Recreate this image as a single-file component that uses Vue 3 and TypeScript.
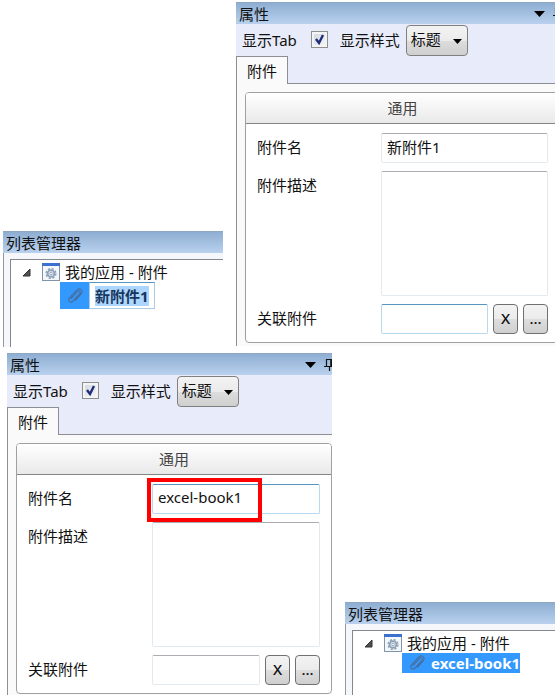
<script setup lang="ts">
import { reactive } from 'vue'

interface Attachment {
  id: string
  name: string
  description: string
  linked: string
  focus: 'name' | 'linked'
  editing: boolean
}

const created = reactive<Attachment>({
  id: 'created', name: '新附件1', description: '', linked: '', focus: 'linked', editing: true,
})
const renamed = reactive<Attachment>({
  id: 'renamed', name: 'excel-book1', description: '', linked: '', focus: 'name', editing: false,
})

// Each step shows its windows from left to right.
const steps = [
  { id: 'before', item: created, windows: ['list', 'props'] },
  { id: 'after', item: renamed, windows: ['props', 'list'] },
]
</script>

<template>
  <main class="page">
    <div v-for="step in steps" :key="step.id" class="step" :class="step.id">
      <template v-for="kind in step.windows" :key="kind">
        <section v-if="kind === 'list'" class="window list">
          <h2 class="title">列表管理器</h2>
          <div class="frame">
            <div class="tree">
              <div class="node">
                <svg class="expander" viewBox="0 0 9 9" aria-hidden="true">
                  <path d="M8 1v7H1z" fill="#505050" stroke="#333" />
                </svg>
                <svg class="app-icon" viewBox="0 0 18 18" aria-hidden="true">
                  <rect x=".5" y=".5" width="17" height="17" fill="#f4f7fa" stroke="#8292a8" />
                  <path d="M0 0h18v3H0z" fill="#3b6fd0" />
                  <circle cx="9" cy="10.500" r="4.900" fill="none" stroke="#8a9fb6" stroke-width="1.400" stroke-dasharray="2.200 1.648" />
                  <circle cx="9" cy="10.500" r="3.400" fill="#e4ebf2" stroke="#8ca1b8" stroke-width="1.800" />
                  <circle cx="9" cy="10.500" r="1.300" fill="#fff" stroke="#8195ac" stroke-width=".8" />
                </svg>
                <span>我的应用 - 附件</span>
              </div>
              <div class="leaf" :class="{ editing: step.item.editing }">
                <span class="clip">
                  <svg viewBox="0 0 18 18" aria-hidden="true">
                    <path d="M5 11.500 11.200 4.800c1.800-1.900 4 .1 2.400 2L7.200 14c-2.600 2.800-6.200-.2-3.700-3.100L10.400 3.300c3.300-3.500 7.600.3 4.500 3.900l-5.300 6" fill="none" stroke="#476f9e" stroke-width="1.200" stroke-linecap="round" />
                  </svg>
                </span>
                <span class="leaf-name"><span class="mark">{{ step.item.name }}</span></span>
              </div>
            </div>
          </div>
        </section>

        <section v-else class="window props">
          <h2 class="title">
            属性
            <span class="tools">
              <svg class="caret" viewBox="0 0 11 6" aria-hidden="true"><path d="M0 0h11L5.500 6z" /></svg>
              <svg class="pin" viewBox="0 0 13 13" aria-hidden="true">
                <path d="M3.500 1v7M3 1.500h7M9 1v7M7.800 1v7M1 8.500h11M6.500 8v5" fill="none" stroke="#111" stroke-width="1.200" />
              </svg>
            </span>
          </h2>
          <div class="toolbar">
            <label :for="step.id + '-tab'">显示Tab</label>
            <input :id="step.id + '-tab'" class="check" type="checkbox" checked />
            <label :for="step.id + '-style'">显示样式</label>
            <span class="drop">
              <select :id="step.id + '-style'"><option>标题</option></select>
              <svg viewBox="0 0 9 5" aria-hidden="true"><path d="M0 0h9L4.500 5z" /></svg>
            </span>
          </div>
          <div class="tabs"><button type="button" class="tab">附件</button><span class="rule"></span></div>
          <div class="body">
            <div class="group">
              <button type="button" class="group-head">通用</button>
              <div class="fields">
                <label :for="step.id + '-name'">附件名</label>
                <div class="name-box">
                  <input :id="step.id + '-name'" v-model="step.item.name" class="box" :class="{ focus: step.item.focus === 'name' }" type="text" />
                  <span v-if="step.item.focus === 'name'" class="callout"></span>
                </div>
                <label :for="step.id + '-desc'">附件描述</label>
                <textarea :id="step.id + '-desc'" v-model="step.item.description" class="box area"></textarea>
                <label :for="step.id + '-link'">关联附件</label>
                <div class="linked">
                  <input :id="step.id + '-link'" v-model="step.item.linked" class="box" :class="{ focus: step.item.focus === 'linked' }" type="text" />
                  <button type="button" class="small" @click="step.item.linked = ''">X</button>
                  <button type="button" class="small">...</button>
                </div>
              </div>
            </div>
          </div>
        </section>
      </template>
    </div>
  </main>
</template>

<style>
body {
  background: #fff;
}
</style>

<style scoped>
* {
  box-sizing: border-box;
}
.page {
  display: flex;
  flex-direction: column;
  gap: 7px;
  padding-top: 2px;
  font: 15px/20px "Noto Sans", "Noto Sans CJK SC", sans-serif;
  color: #111;
}
button, input, select, textarea {
  margin: 0;
  font: inherit;
  color: inherit;
}
.step {
  display: flex;
  gap: 13px;
  align-items: flex-end;
}
.before {
  padding-left: 3px;
}
.after {
  padding-left: 7px;
}
.window {
  min-width: 0;
  overflow: hidden;
}
.before .list {
  flex: 220 1 0;
  margin-bottom: -1px;
}
.before .props {
  flex: 319 1 0;
}
.after .props {
  flex: 325 1 0;
}
.after .list {
  flex: 210 1 0;
  margin-bottom: -2px;
}
.title {
  display: flex;
  align-items: center;
  justify-content: space-between;
  height: 22px;
  margin: 0;
  padding: 0 3px;
  border-top: 1px solid #8fa6c2;
  background: linear-gradient(#8eaed2, #b9d1ee);
  font-size: 15px;
  font-weight: 400;
  line-height: 20px;
}
.frame {
  padding: 6px 0 0 6px;
  border-left: 1px solid #9297a5;
  background: #f6f7fb;
}
.tree {
  height: 88px;
  padding: 2px 0 0 11px;
  border-top: 1px solid #828790;
  border-left: 1px solid #828790;
  background: #fff;
}
.after .tree {
  height: 67px;
}
.node {
  display: flex;
  align-items: center;
  height: 20px;
  white-space: nowrap;
}
.expander {
  width: 9px;
  height: 9px;
  margin-right: 11px;
}
.app-icon {
  width: 18px;
  height: 18px;
  margin-right: 5px;
}
.leaf {
  display: flex;
  width: max-content;
  height: 20px;
  margin-left: 38px;
  background: #3399ff;
  color: #fff;
  font-weight: 700;
}
.clip {
  display: grid;
  place-items: center;
  width: 29px;
}
.clip svg {
  width: 18px;
  height: 18px;
}
.editing {
  height: 27px;
  color: #17365d;
}
.editing .leaf-name {
  padding: 3px 5px;
  border: 1px solid #a9cbe6;
  border-top-color: #5794bf;
  background: #fff;
}
.editing .mark {
  display: block;
  background: #add6ff;
}
.props {
  background: #e8ebfa;
}
.props .title {
  min-width: 332px;
}
.tools {
  display: flex;
  align-items: center;
  gap: 7px;
}
.caret {
  width: 11px;
  height: 6px;
}
.pin {
  width: 13px;
  height: 13px;
}
.toolbar {
  display: flex;
  align-items: center;
  height: 32px;
  padding-left: 6px;
  white-space: nowrap;
}
.check {
  appearance: none;
  width: 17px;
  height: 17px;
  margin: 0 12px 2px 14px;
  border: 1px solid #8e8f8f;
  background:
    url("data:image/svg+xml,%3Csvg xmlns='http://www.w3.org/2000/svg' viewBox='0 0 15 15'%3E%3Cpath d='M4 7l3 4 4-8' fill='none' stroke='%23202d7a' stroke-width='2.400'/%3E%3C/svg%3E"),
    linear-gradient(135deg, #cfd5dd, #f8f8f8);
  box-shadow: inset 0 0 0 2px #f4f4f4;
}
.drop {
  position: relative;
  margin-left: 6px;
}
.drop select {
  appearance: none;
  display: block;
  width: 62px;
  height: 31px;
  padding: 0 0 2px 4px;
  border: 1px solid #808080;
  border-radius: 4px;
  background: linear-gradient(#f3f3f3, #ebebeb 50%, #dddddd 51%, #cfcfcf);
}
.drop svg {
  position: absolute;
  top: 14px;
  right: 6px;
  width: 9px;
  height: 5px;
  pointer-events: none;
}
.tabs {
  display: flex;
  height: 28px;
}
.tab {
  width: 52px;
  padding: 0;
  border: 1px solid #8c8e94;
  border-bottom: 0;
  background: #fafafa;
}
.rule {
  flex: 1;
  border-bottom: 1px solid #8c8e94;
}
.body {
  padding: 8px 0 3px 8px;
  border-left: 1px solid #8c8e94;
  background: #fafafa;
}
.after .body {
  padding-bottom: 1px;
}
.group {
  min-width: 315px;
  border: 1px solid #a0a0a0;
  border-radius: 4px;
  background: #fff;
}
.group-head {
  display: block;
  width: 100%;
  height: 31px;
  padding: 0;
  border: 0;
  border-bottom: 1px solid #858585;
  border-radius: 3px 3px 0 0;
  background: linear-gradient(#ffffff, #e9e9e9);
  color: #444;
}
.fields {
  display: grid;
  grid-template-columns: 116px 1fr;
  gap: 8px;
  padding: 9px 11px 8px;
}
.fields > label {
  padding-top: 4px;
}
.box {
  display: block;
  width: 100%;
  height: 30px;
  padding: 0 5px 4px;
  border: 1px solid #e2e9ef;
  border-top-color: #abadb3;
  border-radius: 2px;
  outline: 0;
  background: #fff;
}
.box.focus {
  border-color: #b7d9ed;
  border-top-color: #5794bf;
}
.area {
  height: 125px;
  resize: none;
}
.name-box {
  position: relative;
}
.callout {
  position: absolute;
  top: -6px;
  left: -5px;
  width: 115px;
  height: 44px;
  border: 4px solid #fe0000;
  pointer-events: none;
}
.linked {
  display: flex;
  gap: 5px;
}
.linked .box {
  flex: 1;
  min-width: 0;
}
.small {
  flex: none;
  width: 25px;
  height: 30px;
  padding: 0 0 2px;
  border: 1px solid #707070;
  border-radius: 4px;
  background: linear-gradient(#f3f3f3, #ebebeb 50%, #dddddd 51%, #cfcfcf);
  font-weight: 500;
}
</style>
